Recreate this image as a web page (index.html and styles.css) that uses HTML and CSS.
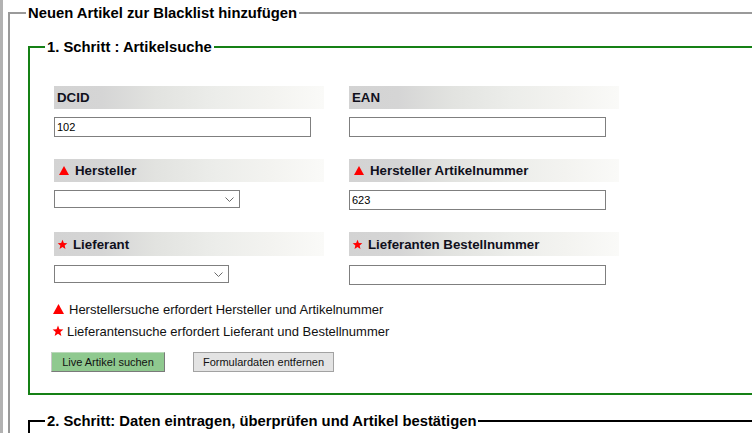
FILE: index.html
```html
<!DOCTYPE html>
<html lang="de">
<head>
<meta charset="utf-8">
<title>Blacklist</title>
<link rel="stylesheet" href="styles.css">
</head>
<body>
<div class="page">
  <fieldset class="box box--outer">
    <legend class="box__legend">Neuen Artikel zur Blacklist hinzufügen</legend>

    <fieldset class="box box--step box--green">
      <legend class="box__legend">1. Schritt : Artikelsuche</legend>

      <div class="fields">
        <div class="field">
          <div class="field__label">DCID</div>
          <input class="field__input" type="text" value="102">
        </div>
        <div class="field">
          <div class="field__label">EAN</div>
          <input class="field__input" type="text" value="">
        </div>

        <div class="field">
          <div class="field__label"><svg class="mark mark--tri" width="10" height="9" viewBox="0 0 10 9"><polygon points="5,0 10,9 0,9" fill="#ff0000"/></svg>Hersteller</div>
          <div class="select select--wide"><span class="select__value"></span><svg class="select__chev" width="9" height="5" viewBox="0 0 9 5"><polyline points="0.5,0.5 4.5,4.5 8.5,0.5" fill="none" stroke="#6a6a6a" stroke-width="1"/></svg></div>
        </div>
        <div class="field">
          <div class="field__label"><svg class="mark mark--tri" width="10" height="9" viewBox="0 0 10 9"><polygon points="5,0 10,9 0,9" fill="#ff0000"/></svg>Hersteller Artikelnummer</div>
          <input class="field__input" type="text" value="623">
        </div>

        <div class="field field--loose">
          <div class="field__label"><svg class="mark mark--star" width="11" height="11" viewBox="0 0 24 24"><polygon points="12,1.5 14.9,8.6 22.5,9.2 16.7,14.1 18.5,21.6 12,17.6 5.5,21.6 7.3,14.1 1.5,9.2 9.1,8.6" fill="#ff0000"/></svg>Lieferant</div>
          <div class="select select--narrow"><span class="select__value"></span><svg class="select__chev" width="9" height="5" viewBox="0 0 9 5"><polyline points="0.5,0.5 4.5,4.5 8.5,0.5" fill="none" stroke="#6a6a6a" stroke-width="1"/></svg></div>
        </div>
        <div class="field field--loose">
          <div class="field__label"><svg class="mark mark--star" width="11" height="11" viewBox="0 0 24 24"><polygon points="12,1.5 14.9,8.6 22.5,9.2 16.7,14.1 18.5,21.6 12,17.6 5.5,21.6 7.3,14.1 1.5,9.2 9.1,8.6" fill="#ff0000"/></svg>Lieferanten Bestellnummer</div>
          <input class="field__input" type="text" value="">
        </div>
      </div>

      <div class="notes">
        <p class="note"><svg class="note__mark note__mark--tri" width="11" height="10" viewBox="0 0 11 10"><polygon points="5.5,0 11,10 0,10" fill="#ff0000"/></svg>Herstellersuche erfordert Hersteller und Artikelnummer</p>
        <p class="note"><svg class="note__mark note__mark--star" width="12" height="12" viewBox="0 0 24 24"><polygon points="12,1 14.9,8.4 22.8,8.9 16.7,14 18.7,21.8 12,17.5 5.3,21.8 7.3,14 1.2,8.9 9.1,8.4" fill="#ff0000"/></svg>Lieferantensuche erfordert Lieferant und Bestellnummer</p>
      </div>

      <div class="actions">
        <button class="btn btn--search" type="button">Live Artikel suchen</button>
        <button class="btn btn--clear" type="button">Formulardaten entfernen</button>
      </div>
    </fieldset>

    <fieldset class="box box--step box--black">
      <legend class="box__legend">2. Schritt: Daten eintragen, überprüfen und Artikel bestätigen</legend>
      <div class="step2"></div>
    </fieldset>
  </fieldset>
</div>
</body>
</html>
```

FILE: styles.css
```css
html, body {
  margin: 0;
  padding: 0;
  background: #ffffff;
  overflow: hidden;
}

body {
  font-family: "Liberation Sans", Arial, sans-serif;
  color: #000;
}

.page {
  border-left: 3px solid #b2b2b2;
  padding-left: 5px;
  padding-top: 4px;
  min-height: 433px;
  box-sizing: border-box;
}

.box {
  margin: 0;
  min-width: 0;
  box-sizing: border-box;
}

.box__legend {
  padding: 0 2px;
  font-size: 14.8px;
  font-weight: bold;
  line-height: 18px;
  color: #000;
}

.box--outer {
  width: 1100px;
  border: 2px solid #9a9a9a;
  border-right: none;
  padding: 16px 0 0 16px;
}

.box--step {
  margin-left: 2px;
  width: 1000px;
  border: 2px solid;
  border-right: none;
  padding: 30px 0 21px 15px;
}

.box--green {
  border-color: #158015;
}

.box--black {
  border-color: #000;
  margin-top: 17px;
  padding-bottom: 40px;
}

.step2 {
  height: 40px;
}

/* fields grid */
.fields {
  margin-left: 9px;
  display: grid;
  grid-template-columns: 270px 270px;
  column-gap: 25px;
  row-gap: 22px;
  align-items: start;
}

.field__label {
  height: 23px;
  line-height: 23px;
  padding-left: 3px;
  margin-bottom: 8px;
  font-size: 13.3px;
  font-weight: bold;
  color: #10101c;
  white-space: nowrap;
  background: linear-gradient(to right, #d3d3d3 0%, #d5d5d5 18%, #e2e3e0 38%, #ecedea 60%, #f3f3f0 80%, #fafaf8 100%);
  display: flex;
  align-items: center;
}

.field--loose .field__label {
  height: 24px;
  margin-bottom: 9px;
}

.mark {
  flex: none;
  display: block;
}

.mark--tri {
  margin-left: 2px;
  margin-right: 6px;
}

.mark--star {
  margin-left: 0;
  margin-right: 5px;
}

.field__input {
  display: block;
  box-sizing: border-box;
  width: 257px;
  height: 20px;
  margin: 0;
  padding: 0 2px;
  border: 1px solid #7f7f7f;
  border-radius: 0;
  background: #fff;
  font-family: "Liberation Sans", Arial, sans-serif;
  font-size: 11px;
  color: #000;
  outline: none;
}

.select {
  position: relative;
  box-sizing: border-box;
  height: 18px;
  border: 1px solid #7f7f7f;
  background: #fff;
}

.select--wide {
  width: 186px;
}

.select--narrow {
  width: 175px;
}

.select__chev {
  position: absolute;
  right: 5px;
  top: 6px;
  display: block;
}

/* notes */
.notes {
  margin: 13px 0 0 9px;
}

.note {
  margin: 0;
  height: 22px;
  display: flex;
  align-items: center;
  font-size: 13px;
  color: #111;
  white-space: nowrap;
}

.note__mark {
  flex: none;
  display: block;
}

.note__mark--tri {
  margin-left: -1px;
  margin-right: 5px;
}

.note__mark--star {
  margin-left: -2px;
  margin-right: 3px;
}

/* buttons */
.actions {
  margin: 10px 0 0 6px;
  display: flex;
  gap: 28px;
}

.btn {
  box-sizing: border-box;
  height: 20px;
  margin: 0;
  padding: 0;
  font-family: "Liberation Sans", Arial, sans-serif;
  font-size: 11px;
  color: #111;
  border-radius: 0;
  cursor: pointer;
}

.btn--search {
  width: 114px;
  background: #8fc98f;
  border: 1px solid;
  border-color: #b9d9b9 #7a7a7a #7a7a7a #c8c8c8;
}

.btn--clear {
  width: 141px;
  background: #e3e3e3;
  border: 1px solid #a2a2a2;
}
```
